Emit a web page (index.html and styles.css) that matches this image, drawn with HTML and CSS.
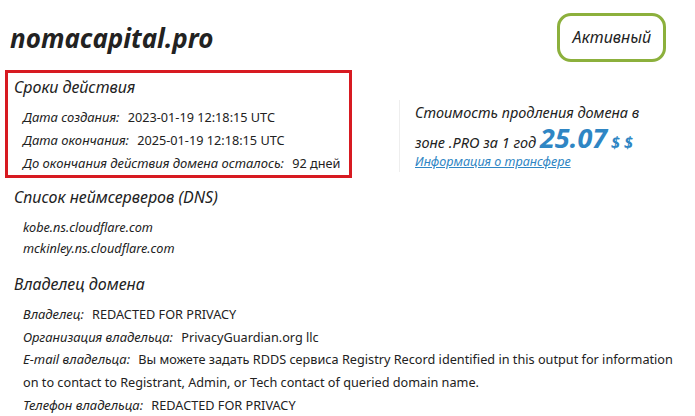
FILE: index.html
```html
<!DOCTYPE html>
<html>
<head>
  <title>nomacapital.pro</title>
  <link rel="stylesheet" href="styles.css">
</head>
<body>
  <div class="header">
    <h1 class="domain">nomacapital.pro</h1>
    <div class="status">Активный</div>
  </div>
  <div class="top">
    <div class="terms">
      <h2 class="section-title">Сроки действия</h2>
      <div class="row"><span class="label">Дата создания:</span> 2023-01-19 12:18:15 UTC</div>
      <div class="row"><span class="label">Дата окончания:</span> 2025-01-19 12:18:15 UTC</div>
      <div class="row"><span class="label">До окончания действия домена осталось:</span> 92 дней</div>
    </div>
    <div class="price">
      <div class="price-text">Стоимость продления домена в</div>
      <div class="price-text">зоне .PRO за 1 год <span class="amount">25.07</span> <span class="currency">$ $</span></div>
      <a class="transfer" href="#">Информация о трансфере</a>
    </div>
  </div>
  <div class="section dns">
    <h2 class="section-title">Список неймсерверов (DNS)</h2>
    <div class="ns">kobe.ns.cloudflare.com</div>
    <div class="ns">mckinley.ns.cloudflare.com</div>
  </div>
  <div class="section owner">
    <h2 class="section-title">Владелец домена</h2>
    <div class="row"><span class="label">Владелец:</span> REDACTED FOR PRIVACY</div>
    <div class="row"><span class="label">Организация владельца:</span> PrivacyGuardian.org llc</div>
    <div class="row"><span class="label">E-mail владельца:</span> Вы можете задать RDDS сервиса Registry Record identified in this output for information on to contact to Registrant, Admin, or Tech contact of queried domain name.</div>
    <div class="row"><span class="label">Телефон владельца:</span> REDACTED FOR PRIVACY</div>
  </div>
</body>
</html>
```

FILE: styles.css
```css
body {
  margin: 0;
  font-family: "Noto Sans", sans-serif;
  color: #222;
  background: #fff;
}
.header {
  display: flex;
  justify-content: space-between;
  align-items: center;
  padding: 13px 29px 0 10px;
}
.domain {
  margin: 0;
  font-size: 26px;
  font-style: italic;
  font-weight: bold;
  color: #222;
}
.status {
  height: 43px;
  line-height: 43px;
  padding: 0 12px 0 13px;
  border: 3px solid #8cb03c;
  border-radius: 14px;
  font-size: 16px;
  font-style: italic;
}
.top {
  display: flex;
  align-items: flex-start;
  margin-top: 8px;
}
.terms {
  width: 332px;
  margin-left: 5px;
  padding: 3px 3px 0 6px;
  border: 3px solid #d71a21;
}
.section-title {
  margin: 0 0 8px 0;
  font-size: 16px;
  line-height: 22px;
  font-style: italic;
  font-weight: normal;
}
.row, .ns {
  padding-left: 9px;
  font-size: 12.7px;
  line-height: 23px;
}
.label {
  font-size: 13px;
  font-style: italic;
  margin-right: 5px;
}
.price {
  margin: 30px 0 0 47px;
  padding: 0 0 2px 15px;
  border-left: 1px solid #eee;
  font-style: italic;
}
.price-text {
  font-size: 14.5px;
  line-height: 25px;
}
.amount {
  font-size: 27px;
  font-weight: bold;
  color: #2f86c4;
}
.currency {
  font-size: 16px;
  font-weight: bold;
  color: #2f86c4;
}
.transfer {
  display: block;
  margin-top: -2px;
  font-size: 12.6px;
  color: #2f86c4;
}
.section {
  padding-left: 14px;
}
.dns {
  margin-top: 8px;
}
.dns .section-title {
  margin-bottom: 9px;
}
.ns {
  font-style: italic;
  line-height: 21px;
}
.owner {
  margin-top: 14px;
}
.owner .section-title {
  margin-bottom: 8px;
}
.owner .row {
  line-height: 22.7px;
  padding-right: 15px;
}
```
